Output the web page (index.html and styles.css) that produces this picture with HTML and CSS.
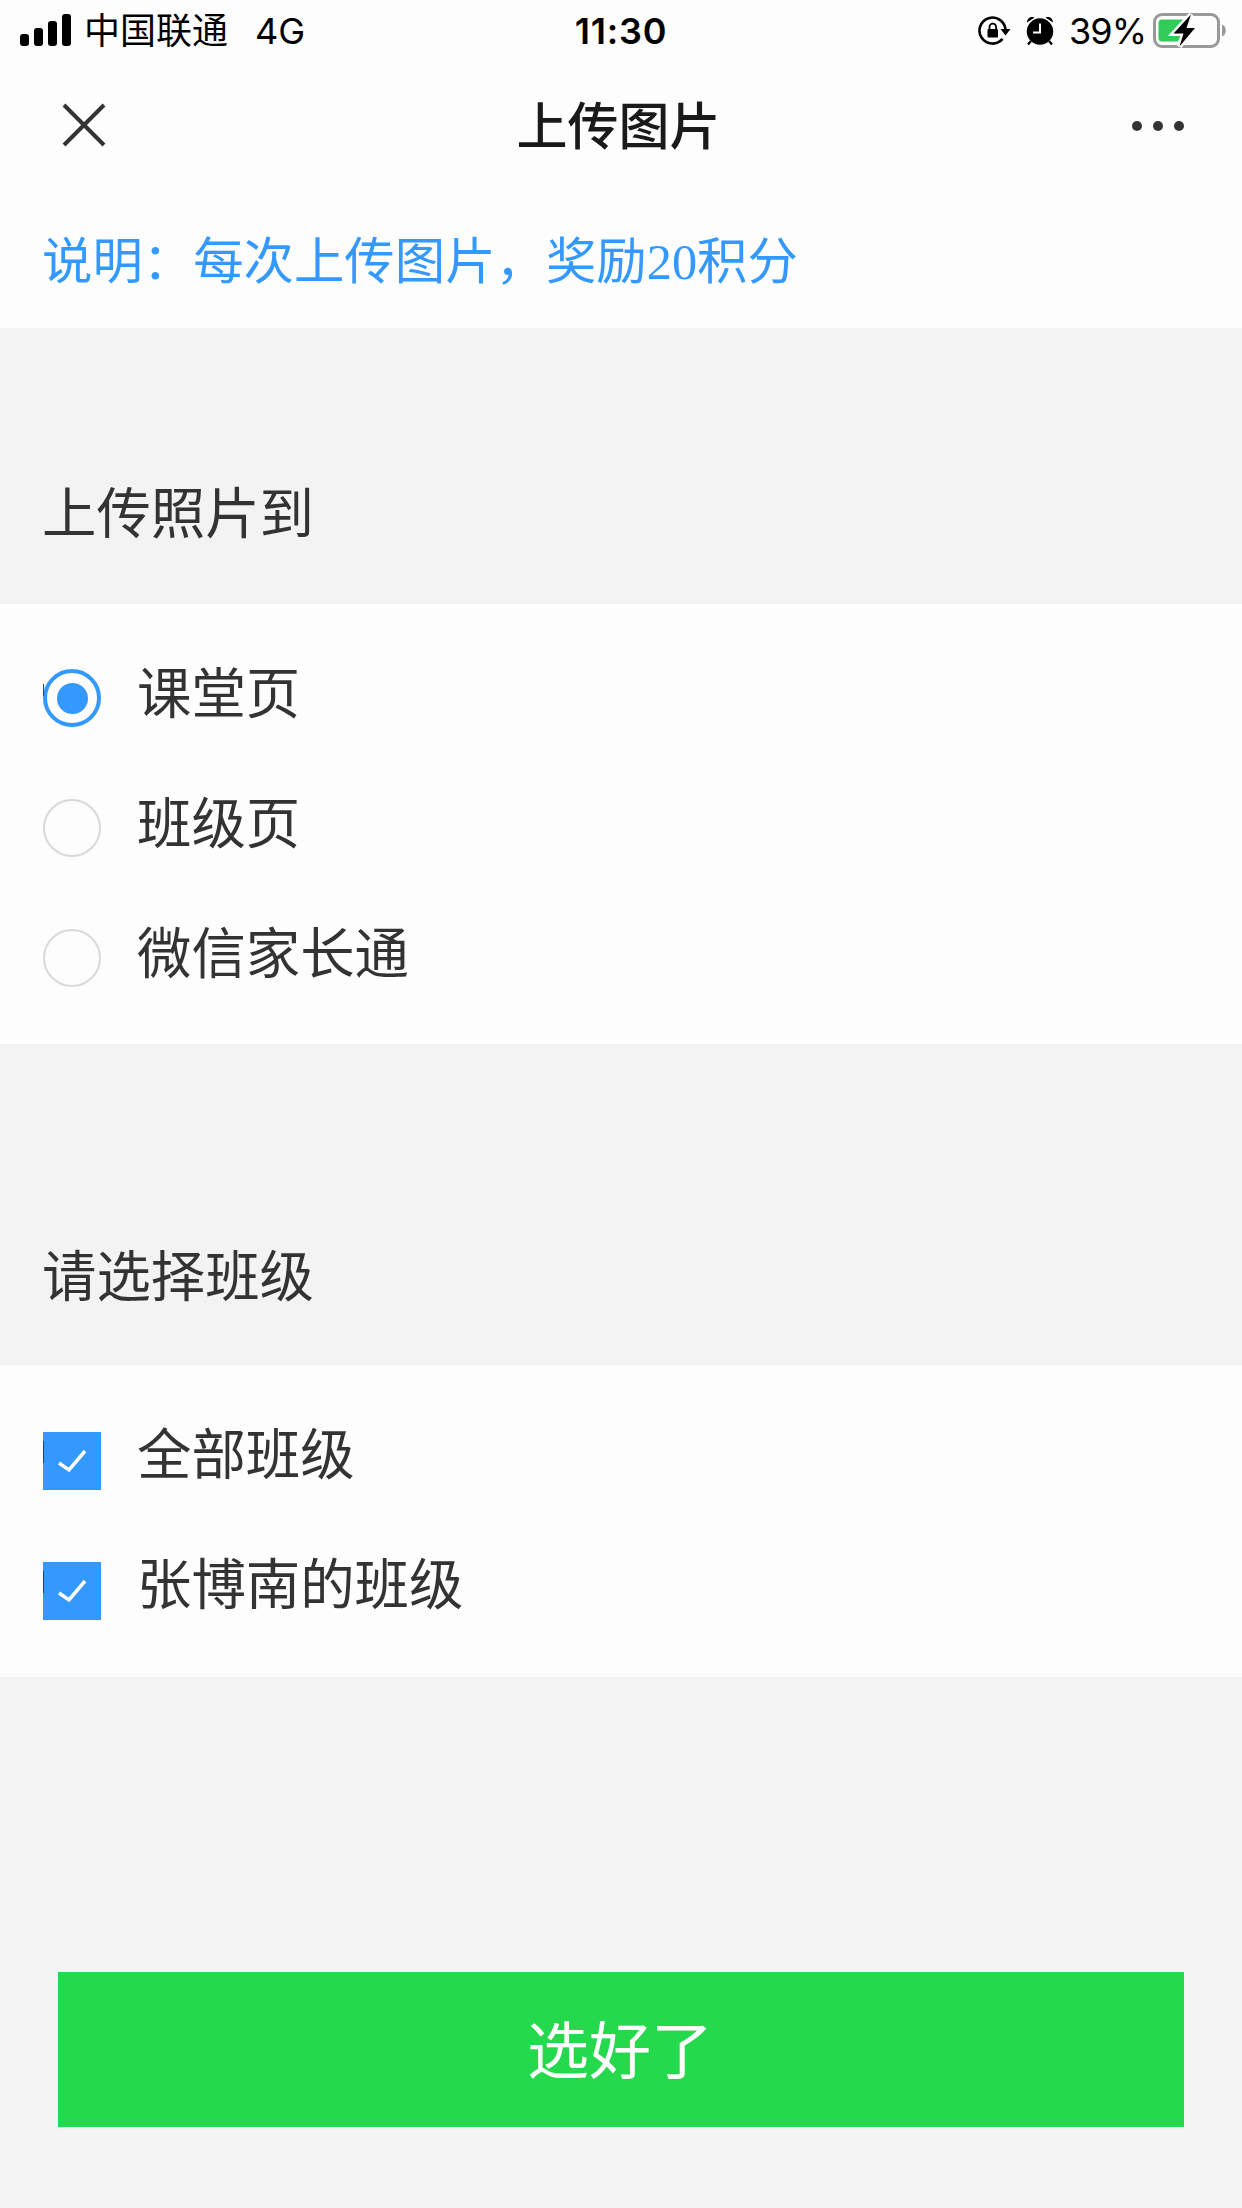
FILE: index.html
```
<!DOCTYPE html>
<html lang="zh-CN">
<head>
  <meta charset="UTF-8">
  <meta name="viewport" content="width=device-width, initial-scale=1.0">
  <title>上传图片</title>
  <link rel="stylesheet" href="styles.css">
</head>
<body>
  <!-- Status bar -->
  <div class="status-bar">
    <div class="status-left">
      <svg class="signal" width="52" height="33" viewBox="0 0 52 33">
        <rect x="0" y="20" width="9" height="12" rx="3"/>
        <rect x="14" y="14" width="9" height="18" rx="3"/>
        <rect x="28" y="7" width="9" height="25" rx="3"/>
        <rect x="42" y="0" width="9" height="32" rx="3"/>
      </svg>
      <span class="carrier">中国联通</span>
      <span class="network">4G</span>
    </div>
    <div class="status-time">11:30</div>
    <div class="status-right">
      <svg class="lock" width="34" height="30" viewBox="0 0 34 30">
        <path d="M27.5 14.5A13 13 0 1 0 24.5 22.9" fill="none" stroke="#000" stroke-width="2.6"/>
        <path d="M22.500 13h10l-5 6.500z"/>
        <rect x="9.500" y="13" width="10.500" height="8.500" rx="1"/>
        <path d="M11.500 14v-3a3.300 3.300 0 0 1 6.600 0v3" fill="none" stroke="#000" stroke-width="1.8"/>
      </svg>
      <svg class="alarm" width="28" height="30" viewBox="0 0 28 30">
        <circle cx="14" cy="15.5" r="13.2"/>
        <path d="M1 6.500C1 2 5 0 8.500 1.500zM27 6.500C27 2 23 0 19.500 1.500z"/>
        <path d="M5 25l-3 3.500M23 25l3 3.500" stroke="#000" stroke-width="2.4"/>
        <path d="M14 7.500v9H7" fill="none" stroke="#fff" stroke-width="2"/>
      </svg>
      <span class="percent">39%</span>
      <svg class="battery" width="74" height="36" viewBox="0 0 74 36">
        <rect x="1.5" y="1.5" width="64" height="32" rx="7.5" fill="none" stroke="#999" stroke-width="3"/>
        <path d="M69 11.500c5 1.500 5 10.500 0 12z" fill="#999"/>
        <path d="M9 6.500h22L19 21h10l-4 7.500H9a3.500 3.500 0 0 1-3.500-3.500V10A3.500 3.500 0 0 1 9 6.500z" fill="#31cb57"/>
        <path d="M38 1.500L20.500 20.500h10L26.500 33.500 42 15H33.500z" stroke="#fdfdfd" stroke-width="5"/>
        <path d="M38 1.500L20.500 20.500h10L26.500 33.500 42 15H33.500z"/>
      </svg>
    </div>
  </div>

  <!-- Nav bar -->
  <div class="nav">
    <svg class="close" width="44" height="44" viewBox="0 0 44 44">
      <path d="M2 2l40 40M42 2L2 42"/>
    </svg>
    <h1 class="nav-title">上传图片</h1>
    <div class="more"><i></i><i></i><i></i></div>
  </div>

  <div class="notice">说明：每次上传图片，奖励20积分</div>

  <form>
    <h2 class="group-title">上传照片到</h2>
    <div class="group">
      <label class="option"><span class="radio checked"></span>课堂页</label>
      <label class="option"><span class="radio"></span>班级页</label>
      <label class="option"><span class="radio"></span>微信家长通</label>
    </div>

    <h2 class="group-title group-title-class">请选择班级</h2>
    <div class="group group-class">
      <label class="option">
        <span class="checkbox"><svg width="30" height="24" viewBox="0 0 30 24"><path d="M2 14l10 7L28 2"/></svg></span>全部班级
      </label>
      <label class="option">
        <span class="checkbox"><svg width="30" height="24" viewBox="0 0 30 24"><path d="M2 14l10 7L28 2"/></svg></span>张博南的班级
      </label>
    </div>

    <button type="button" class="submit">选好了</button>
  </form>
</body>
</html>
```
FILE: styles.css
```
* {
  box-sizing: border-box;
}
body {
  margin: 0;
  min-height: 2208px;
  background-color: #f3f3f3;
  color: #333;
  font-family: "Noto Sans CJK SC", sans-serif;
}

/* Status bar */
.status-bar {
  display: grid;
  grid-template-columns: 1fr auto 1fr;
  height: 60px;
  padding: 0 16px 0 20px;
  background-color: #fdfdfd;
  color: #000;
  font-family: Inter, "Noto Sans CJK SC", sans-serif;
  font-size: 36px;
  line-height: 60px;
}
.status-left,
.status-right {
  display: flex;
  align-items: center;
}
.status-right {
  justify-content: flex-end;
}
.carrier {
  margin-left: 12px;
}
.network {
  margin-left: 27px;
}
.status-time {
  padding: 1px 4px 0 0;
  font-weight: 600;
  letter-spacing: 0.8px;
}
.lock {
  margin-right: 14px;
}
.alarm {
  margin-right: 15px;
}
.percent {
  padding-top: 1px;
  letter-spacing: -1px;
}
.battery {
  margin: 0 -1px 0 7px;
}

/* Nav bar */
.nav {
  display: flex;
  align-items: center;
  justify-content: space-between;
  height: 132px;
  padding: 0 58px 0 62px;
  background-color: #fdfdfd;
}
.close {
  margin-bottom: 2px;
  fill: none;
  stroke: #333;
  stroke-width: 4;
}
.nav-title {
  margin: 0;
  padding: 0 1px 6px 0;
  color: #1a1a1a;
  font-size: 51px;
  font-weight: 500;
}
.more {
  display: flex;
  gap: 11px;
}
.more i {
  width: 10px;
  height: 10px;
  border-radius: 50%;
  background-color: #333;
}

.notice {
  height: 136px;
  padding: 2px 0 0 42px;
  background-color: #fdfdfd;
  color: #39f;
  font-family: "Liberation Serif", "Noto Sans CJK SC", serif;
  font-size: 50.4px;
  line-height: 136px;
}

/* Option groups */
.group-title {
  display: flex;
  align-items: flex-end;
  height: 276px;
  margin: 0;
  padding: 0 42px 54px;
  font-size: 54.4px;
  font-weight: 400;
  line-height: 80px;
}
.group-title-class {
  height: 321px;
  padding-bottom: 52px;
}
.group {
  padding: 20px 43px 30px;
  background-color: #fdfdfd;
}
.group-class {
  padding-bottom: 32px;
}
.option {
  display: flex;
  align-items: center;
  height: 130px;
  font-size: 54.4px;
}
.radio,
.checkbox {
  display: flex;
  align-items: center;
  justify-content: center;
  position: relative;
  width: 58px;
  height: 58px;
  margin: 18px 36px 0 0;
}
.radio {
  border: 2px solid #d9d9d9;
  border-radius: 50%;
}
.radio.checked {
  border: 4px solid #39f;
}
.radio.checked::before {
  content: "";
  width: 31px;
  height: 31px;
  border-radius: 50%;
  background-color: #39f;
}
.checkbox {
  margin-top: 21px;
  background-color: #39f;
}
.radio.checked::after,
.checkbox::after {
  content: "";
  position: absolute;
  top: 9px;
  left: 0;
  width: 1px;
  height: 22px;
  background-color: #23405e;
}
.radio.checked::after {
  top: 11px;
  left: -4px;
  height: 12px;
}
.checkbox path {
  fill: none;
  stroke: #fff;
  stroke-width: 3.5;
}

.submit {
  display: block;
  width: 1126px;
  height: 155px;
  margin: 295px auto 0;
  padding: 0 2px 6px 0;
  border: none;
  background-color: #25d94d;
  color: #fff;
  font-family: inherit;
  font-size: 62px;
}
```
